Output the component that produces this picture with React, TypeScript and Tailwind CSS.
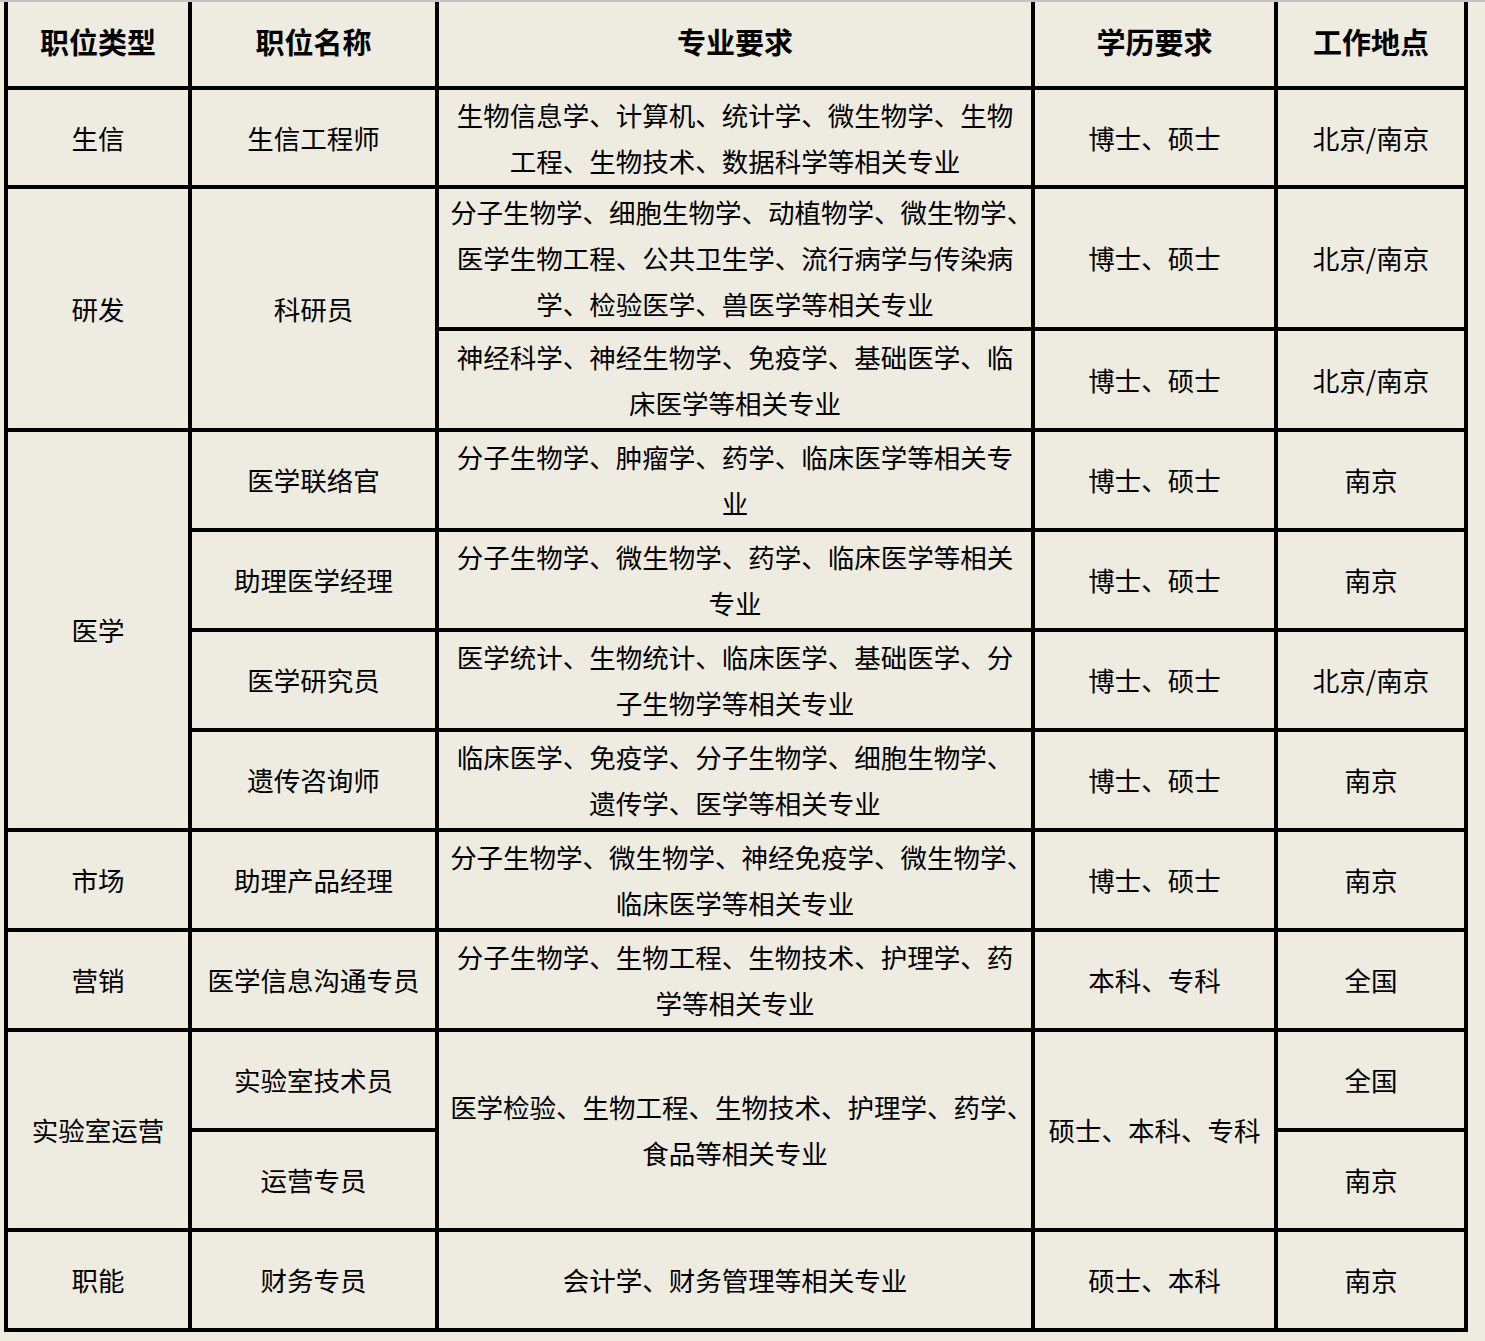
const cell = "bg-[#eeebe0] flex items-center justify-center text-center";

function C({ className = "", children }: { className?: string; children: React.ReactNode }) {
  return <div className={`${cell} ${className}`}>{children}</div>;
}

// 专业要求 lines are broken as in the source sheet; a full line's trailing 、 is set half-width
function M({ lines, className = "" }: { lines: string[]; className?: string }) {
  return (
    <div className={`${cell} flex-col whitespace-nowrap ${className}`}>
      {lines.map((l, i) =>
        l.length >= 22 && l.endsWith("、") ? (
          <span key={i}>
            {l.slice(0, -1)}
            <span className="inline-block w-[0.5em] text-left overflow-visible">、</span>
          </span>
        ) : (
          <span key={i}>{l}</span>
        )
      )}
    </div>
  );
}

export default function App() {
  const head = "font-bold text-[29px] pb-[6px]";
  return (
    <div
      lang="zh-CN"
      className="min-h-[1341px] w-full bg-[#eeebe0] border-t-2 border-[#c3c3c3] text-black text-[26.5px] leading-[46px]"
      style={{ fontFamily: '"Noto Sans CJK SC", "Noto Sans", sans-serif' }}
    >
      <div className="ml-[4px] w-[1464px] bg-black px-[4px] pb-[4px] grid gap-[4px] grid-cols-[180px_243px_592px_239px_186px] grid-rows-[84px_95px_138px_97px_repeat(9,96px)]">
        {/* header */}
        <C className={head}>职位类型</C>
        <C className={head}>职位名称</C>
        <C className={head}>专业要求</C>
        <C className={head}>学历要求</C>
        <C className={head}>工作地点</C>

        {/* 生信 */}
        <C>生信</C>
        <C>生信工程师</C>
        <M lines={["生物信息学、计算机、统计学、微生物学、生物", "工程、生物技术、数据科学等相关专业"]} />
        <C>博士、硕士</C>
        <C>北京/南京</C>

        {/* 研发 */}
        <C className="row-span-2">研发</C>
        <C className="row-span-2">科研员</C>
        <M
          lines={[
            "分子生物学、细胞生物学、动植物学、微生物学、",
            "医学生物工程、公共卫生学、流行病学与传染病",
            "学、检验医学、兽医学等相关专业",
          ]}
        />
        <C>博士、硕士</C>
        <C>北京/南京</C>
        <M lines={["神经科学、神经生物学、免疫学、基础医学、临", "床医学等相关专业"]} />
        <C>博士、硕士</C>
        <C>北京/南京</C>

        {/* 医学 */}
        <C className="row-span-4">医学</C>
        <C>医学联络官</C>
        <M lines={["分子生物学、肿瘤学、药学、临床医学等相关专", "业"]} />
        <C>博士、硕士</C>
        <C>南京</C>
        <C>助理医学经理</C>
        <M lines={["分子生物学、微生物学、药学、临床医学等相关", "专业"]} />
        <C>博士、硕士</C>
        <C>南京</C>
        <C>医学研究员</C>
        <M lines={["医学统计、生物统计、临床医学、基础医学、分", "子生物学等相关专业"]} />
        <C>博士、硕士</C>
        <C>北京/南京</C>
        <C>遗传咨询师</C>
        <M lines={["临床医学、免疫学、分子生物学、细胞生物学、", "遗传学、医学等相关专业"]} />
        <C>博士、硕士</C>
        <C>南京</C>

        {/* 市场 */}
        <C>市场</C>
        <C>助理产品经理</C>
        <M lines={["分子生物学、微生物学、神经免疫学、微生物学、", "临床医学等相关专业"]} />
        <C>博士、硕士</C>
        <C>南京</C>

        {/* 营销 */}
        <C>营销</C>
        <C>医学信息沟通专员</C>
        <M lines={["分子生物学、生物工程、生物技术、护理学、药", "学等相关专业"]} />
        <C>本科、专科</C>
        <C>全国</C>

        {/* 实验室运营 */}
        <C className="row-span-2">实验室运营</C>
        <C>实验室技术员</C>
        <M className="row-span-2" lines={["医学检验、生物工程、生物技术、护理学、药学、", "食品等相关专业"]} />
        <C className="row-span-2">硕士、本科、专科</C>
        <C>全国</C>
        <C>运营专员</C>
        <C>南京</C>

        {/* 职能 */}
        <C>职能</C>
        <C>财务专员</C>
        <M lines={["会计学、财务管理等相关专业"]} />
        <C>硕士、本科</C>
        <C>南京</C>
      </div>
    </div>
  );
}
